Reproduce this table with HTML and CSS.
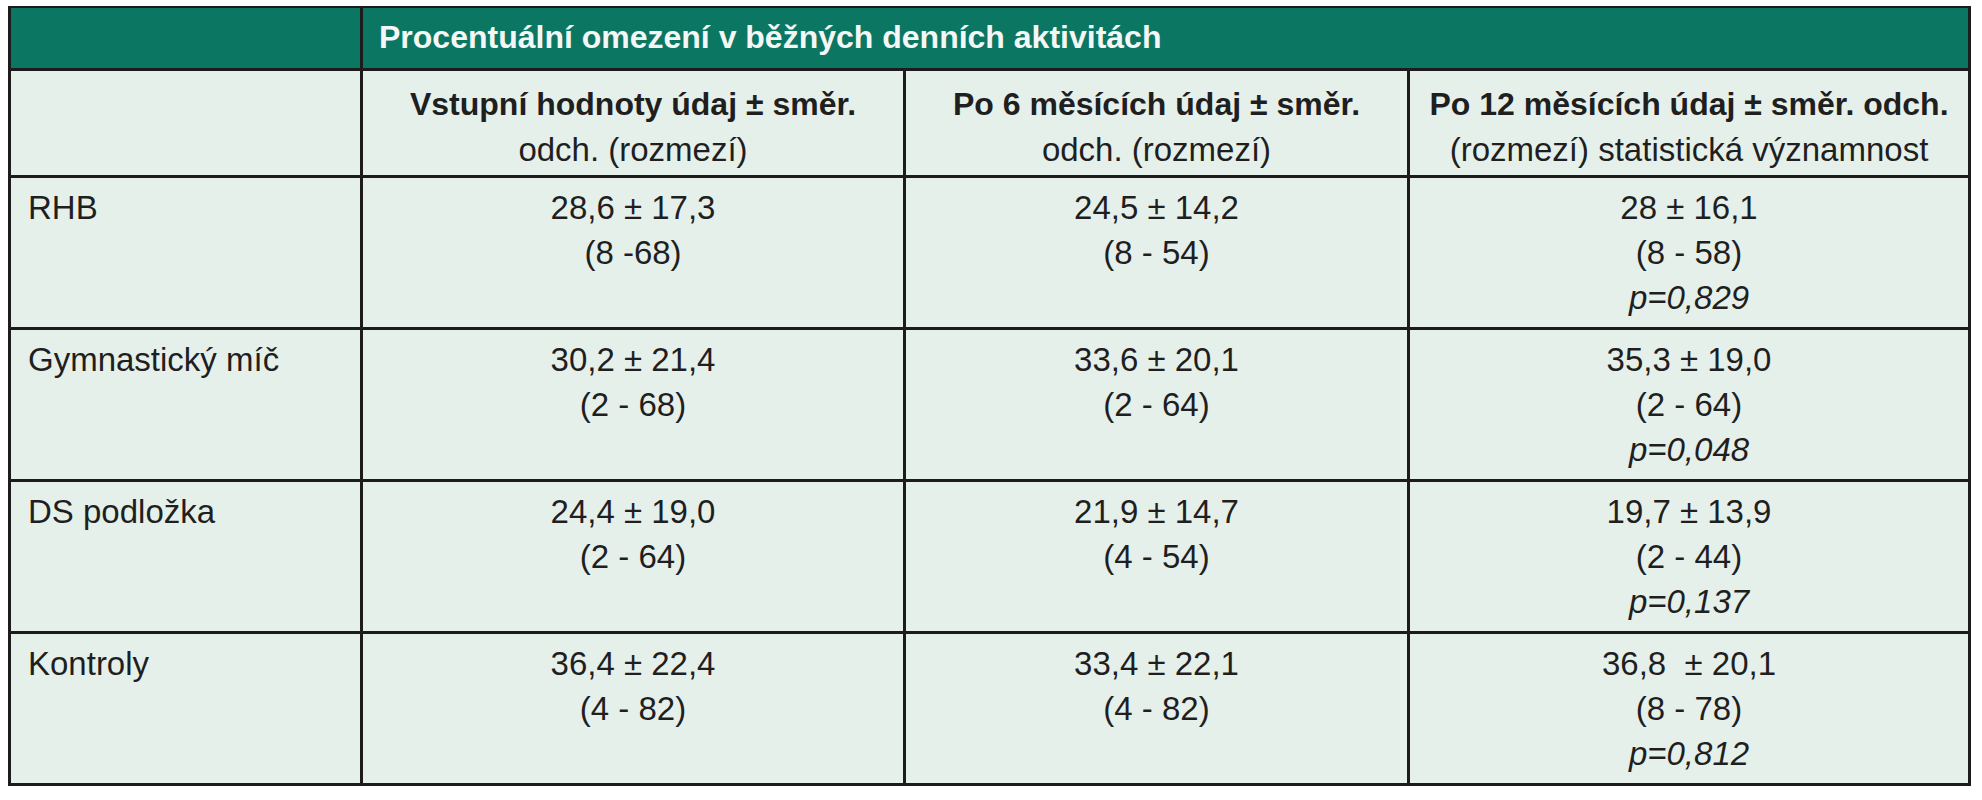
FILE: index.html
```html
<!DOCTYPE html>
<html lang="cs">
<head>
<meta charset="utf-8">
<title>Procentuální omezení v běžných denních aktivitách</title>
<link rel="stylesheet" href="styles.css">
</head>
<body>
<div class="page">
<table class="data">
  <colgroup>
    <col class="c1"><col class="c2"><col class="c3"><col class="c4">
  </colgroup>
  <thead>
    <tr class="title-row">
      <th class="blank"></th>
      <th class="title" colspan="3">Procentuální omezení v běžných denních aktivitách</th>
    </tr>
    <tr class="sub-row">
      <th class="sub-blank"></th>
      <th class="sub"><b>Vstupní hodnoty údaj ± směr.</b><br>odch. (rozmezí)</th>
      <th class="sub"><b>Po 6 měsících údaj ± směr.</b><br>odch. (rozmezí)</th>
      <th class="sub"><b>Po 12 měsících údaj ± směr. odch.</b><br>(rozmezí) statistická významnost</th>
    </tr>
  </thead>
  <tbody>
    <tr>
      <td class="label">RHB</td>
      <td class="val">28,6 ± 17,3<br>(8 -68)</td>
      <td class="val">24,5 ± 14,2<br>(8 - 54)</td>
      <td class="val">28 ± 16,1<br>(8 - 58)<br><i>p=0,829</i></td>
    </tr>
    <tr>
      <td class="label">Gymnastický míč</td>
      <td class="val">30,2 ± 21,4<br>(2 - 68)</td>
      <td class="val">33,6 ± 20,1<br>(2 - 64)</td>
      <td class="val">35,3 ± 19,0<br>(2 - 64)<br><i>p=0,048</i></td>
    </tr>
    <tr>
      <td class="label">DS podložka</td>
      <td class="val">24,4 ± 19,0<br>(2 - 64)</td>
      <td class="val">21,9 ± 14,7<br>(4 - 54)</td>
      <td class="val">19,7 ± 13,9<br>(2 - 44)<br><i>p=0,137</i></td>
    </tr>
    <tr>
      <td class="label">Kontroly</td>
      <td class="val">36,4 ± 22,4<br>(4 - 82)</td>
      <td class="val">33,4 ± 22,1<br>(4 - 82)</td>
      <td class="val">36,8 &nbsp;± 20,1<br>(8 - 78)<br><i>p=0,812</i></td>
    </tr>
  </tbody>
</table>
</div>
</body>
</html>
```

FILE: styles.css
```css
html, body {
  margin: 0;
  padding: 0;
  background: #ffffff;
}

.page {
  padding: 6px 0 0 8px;
}

.data {
  border-collapse: collapse;
  table-layout: fixed;
  width: 1960px;
  font-family: "Liberation Sans", Arial, sans-serif;
  color: #1f1f1f;
  background: #e6f0eb;
}

.c1 { width: 352px; }
.c2 { width: 543px; }
.c3 { width: 504px; }
.c4 { width: 561px; }

.data th,
.data td {
  border: 3px solid #1c1c1c;
  padding: 0;
}

.title-row {
  height: 62px;
}

.title-row th {
  background: #0b7763;
  border-top-width: 2px;
}

.title {
  color: #f4f7f5;
  font-size: 32px;
  font-weight: bold;
  text-align: left;
  padding-left: 16px !important;
  vertical-align: middle;
}

.sub-row {
  height: 107px;
}

.sub {
  font-size: 33px;
  font-weight: normal;
  line-height: 45px;
  text-align: center;
  vertical-align: middle;
  padding-top: 8px !important;
}

.sub b {
  font-size: 32px;
  font-weight: bold;
}

.data tbody tr {
  height: 152px;
}

.label {
  font-size: 33px;
  line-height: 45px;
  vertical-align: top;
  text-align: left;
  padding: 7px 0 0 17px !important;
}

.val {
  font-size: 33px;
  line-height: 45px;
  vertical-align: top;
  text-align: center;
  padding-top: 7px !important;
}

.val i {
  font-style: italic;
}
```
